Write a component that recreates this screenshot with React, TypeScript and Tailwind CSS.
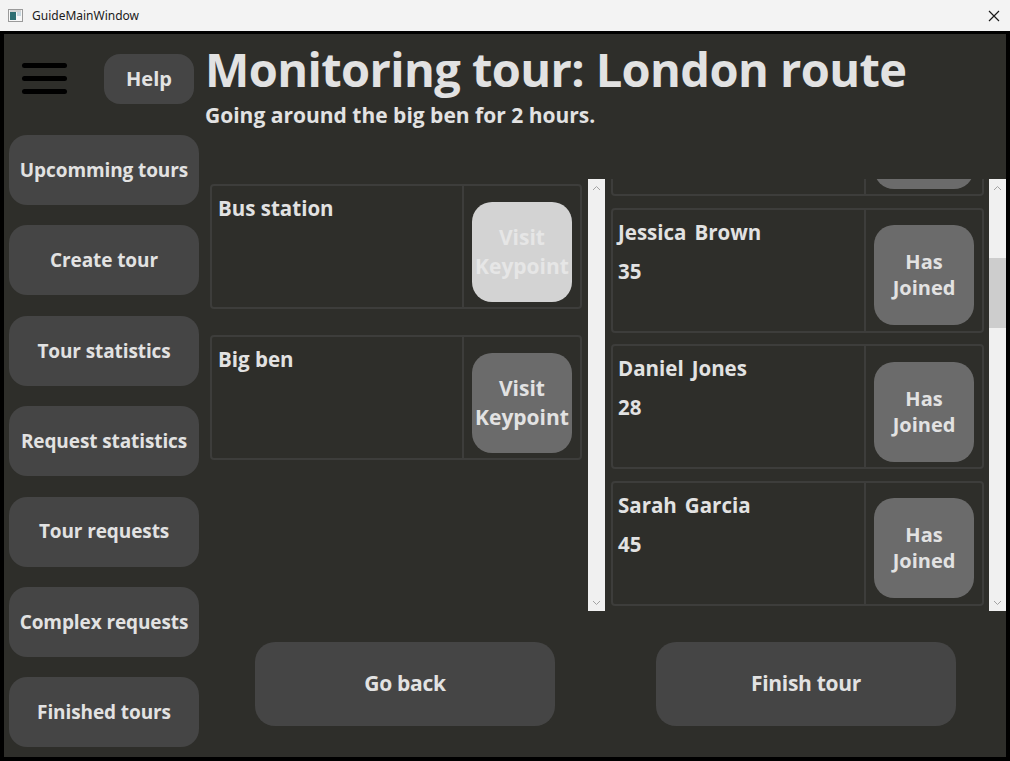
import React from "react";

const font = { fontFamily: '"Open Sans", "Noto Sans", sans-serif' };

function SideButton({ label }: { label: string }) {
  return (
    <div className="h-[70px] w-[190px] rounded-[18px] bg-[#454545] flex items-center justify-center text-[19px] font-bold text-[#e2e2e2] tracking-[-0.1px]">
      {label}
    </div>
  );
}

function ScrollBar({ thumb }: { thumb?: boolean }) {
  return (
    <div className="w-[17px] h-full bg-[#f0f0f0] flex flex-col">
      <div className="h-[17px] flex items-center justify-center">
        <svg width="9" height="6" viewBox="0 0 9 6">
          <path d="M1 5 L4.5 1.5 L8 5" fill="none" stroke="#a3a3a3" strokeWidth="1" />
        </svg>
      </div>
      <div className="flex-1 flex flex-col">
        {thumb && (
          <>
            <div className="h-[62px]" />
            <div className="h-[70px] bg-[#cdcdcd]" />
          </>
        )}
      </div>
      <div className="h-[17px] flex items-center justify-center">
        <svg width="9" height="6" viewBox="0 0 9 6">
          <path d="M1 1 L4.5 4.5 L8 1" fill="none" stroke="#a3a3a3" strokeWidth="1" />
        </svg>
      </div>
    </div>
  );
}

function KeypointCard({ name, disabled }: { name: string; disabled?: boolean }) {
  return (
    <div className="h-[125px] w-[372px] shrink-0 rounded-[4px] border-2 border-[#3d3d3b] flex">
      <div className="w-[252px] border-r-2 border-[#3d3d3b] pl-[6px] pt-[9px]">
        <div className="text-[20.5px] font-bold text-[#e2e2e2] leading-[26px]">{name}</div>
      </div>
      <div className="flex-1 flex items-center justify-center pt-[10px]">
        <div
          className={
            "w-[100px] h-[100px] rounded-[20px] flex items-center justify-center text-center text-[21px] font-bold leading-[29px] " +
            (disabled ? "bg-[#d3d3d3] text-[#e6e6e6]" : "bg-[#6b6b6b] text-[#e2e2e2]")
          }
        >
          Visit
          <br />
          Keypoint
        </div>
      </div>
    </div>
  );
}

function TouristCard({ first, last, age, className }: { first: string; last: string; age: string; className?: string }) {
  return (
    <div className={"h-[125px] w-[373px] shrink-0 rounded-[4px] border-2 border-[#3d3d3b] flex " + (className ?? "")}>
      <div className="w-[253px] border-r-2 border-[#3d3d3b] pl-[5px] pt-[9px]">
        <div className="text-[20.5px] font-bold text-[#e2e2e2] leading-[26px] flex gap-[8px]">
          <span>{first}</span>
          <span>{last}</span>
        </div>
        <div className="mt-[13px] text-[20.5px] font-bold text-[#e2e2e2] leading-[26px]">{age}</div>
      </div>
      <div className="flex-1 flex items-center justify-center pt-[10px]">
        <div className="w-[100px] h-[100px] rounded-[20px] bg-[#6b6b6b] flex items-center justify-center text-center text-[20px] font-bold leading-[26px] text-[#e2e2e2]">
          Has
          <br />
          Joined
        </div>
      </div>
    </div>
  );
}

export default function App() {
  return (
    <div className="w-[1010px] h-[761px] bg-[#f3f3f3] flex flex-col overflow-hidden" style={font}>
      {/* title bar */}
      <div className="h-[31px] flex items-center pl-[8px] pr-[10px] shrink-0">
        <svg width="15" height="13" viewBox="0 0 15 13">
          <rect x="0.5" y="0.5" width="14" height="12" fill="#f7f7f7" stroke="#9a9a9a" />
          <rect x="2" y="3" width="6" height="8" fill="#2f6f73" />
          <rect x="9" y="3" width="4" height="4" fill="#c8d8e0" />
          <rect x="2" y="1.5" width="11" height="1" fill="#b0b0b0" />
        </svg>
        <span className="ml-[9px] text-[12px] text-[#1a1a1a]" style={{ fontFamily: '"Noto Sans", sans-serif' }}>
          GuideMainWindow
        </span>
        <div className="flex-1" />
        <svg width="12" height="12" viewBox="0 0 12 12">
          <path d="M1 1 L11 11 M11 1 L1 11" stroke="#1a1a1a" strokeWidth="1.2" />
        </svg>
      </div>
      {/* window body */}
      <div className="flex-1 bg-black pt-[3px] pl-[4px] pr-[4px] pb-[4px] flex">
        <div className="flex-1 bg-[#2e2e2a] flex">
          {/* sidebar */}
          <div className="w-[201px] shrink-0 flex flex-col pl-[5px]">
            <div className="h-[101px] flex items-start pt-[20px]">
              <div className="ml-[13px] mt-[9px] w-[45px] flex flex-col gap-[8px]">
                <div className="h-[5px] rounded-full bg-black" />
                <div className="h-[5px] rounded-full bg-black" />
                <div className="h-[5px] rounded-full bg-black" />
              </div>
              <div className="ml-[37px] w-[90px] h-[50px] rounded-[16px] bg-[#454545] flex items-center justify-center text-[20px] font-bold text-[#e2e2e2]">
                Help
              </div>
            </div>
            <div className="flex flex-col gap-[20.4px]">
              <SideButton label="Upcomming tours" />
              <SideButton label="Create tour" />
              <SideButton label="Tour statistics" />
              <SideButton label="Request statistics" />
              <SideButton label="Tour requests" />
              <SideButton label="Complex requests" />
              <SideButton label="Finished tours" />
            </div>
          </div>
          {/* main */}
          <div className="flex-1 flex flex-col">
            <div className="h-[145px] shrink-0 pt-[5px]">
              <div className="text-[47px] font-bold text-[#e2e2e2] leading-[60px] tracking-[-0.6px]">
                Monitoring tour: London route
              </div>
              <div className="mt-[2px] text-[21px] font-bold text-[#e2e2e2] leading-[28px]">
                Going around the big ben for 2 hours.
              </div>
            </div>
            <div className="h-[432px] flex">
              <div className="w-[383px] flex flex-col pl-[5px] pt-[5px] gap-[26px] overflow-hidden">
                <KeypointCard name="Bus station" disabled />
                <KeypointCard name="Big ben" />
              </div>
              <ScrollBar />
              <div className="w-[6px]" />
              <div className="w-[378px] flex flex-col gap-[11.5px] overflow-hidden">
                <TouristCard first="Michael" last="Smith" age="42" className="mt-[-108px]" />
                <TouristCard first="Jessica" last="Brown" age="35" />
                <TouristCard first="Daniel" last="Jones" age="28" />
                <TouristCard first="Sarah" last="Garcia" age="45" />
                <TouristCard first="David" last="Miller" age="31" />
              </div>
              <ScrollBar thumb />
            </div>
            <div className="flex-1 flex items-start pt-[31px] pl-[50px] gap-[101px]">
              <div className="w-[300px] h-[84px] rounded-[20px] bg-[#454545] flex items-center justify-center text-[21px] font-bold text-[#e2e2e2] tracking-[-0.3px]">
                Go back
              </div>
              <div className="w-[300px] h-[84px] rounded-[20px] bg-[#454545] flex items-center justify-center text-[21px] font-bold text-[#e2e2e2] tracking-[-0.3px]">
                Finish tour
              </div>
            </div>
          </div>
        </div>
      </div>
    </div>
  );
}
